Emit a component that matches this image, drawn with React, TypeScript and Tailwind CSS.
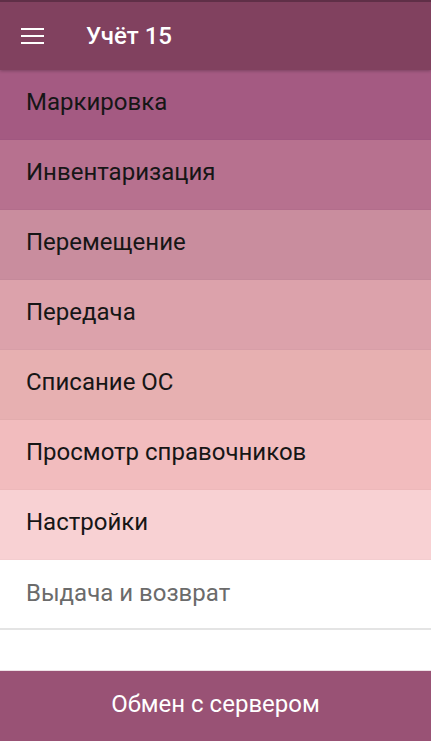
import React from 'react';

const items = [
  { label: 'Маркировка', bg: 'bg-[#a45a82]', line: 'border-[#a05780]' },
  { label: 'Инвентаризация', bg: 'bg-[#b7718f]', line: 'border-[#b26d8b]' },
  { label: 'Перемещение', bg: 'bg-[#c98d9e]', line: 'border-[#c4899a]' },
  { label: 'Передача', bg: 'bg-[#dca2ab]', line: 'border-[#d79ea7]' },
  { label: 'Списание ОС', bg: 'bg-[#e7b0b1]', line: 'border-[#e2acad]' },
  { label: 'Просмотр справочников', bg: 'bg-[#f2bcbe]', line: 'border-[#edb8ba]' },
  { label: 'Настройки', bg: 'bg-[#f8d1d3]', line: 'border-[#f3cdcf]' },
];

export default function App() {
  return (
    <div className="w-[431px] h-[741px] flex flex-col bg-white font-['Roboto','Liberation_Sans',sans-serif]">
      <header className="relative z-10 h-[70px] shrink-0 flex items-center bg-[#81415f] border-t-2 border-[#5f2f47] shadow-[0_1px_3px_rgba(0,0,0,0.25)]">
        <div className="w-[86px] pl-[21px] flex">
          <svg width="23" height="16" viewBox="0 0 23 16" className="text-white">
            <rect x="0" y="0" width="23" height="2" fill="currentColor" />
            <rect x="0" y="7" width="23" height="2" fill="currentColor" />
            <rect x="0" y="14" width="23" height="2" fill="currentColor" />
          </svg>
        </div>
        <h1 className="text-white text-[24px] font-medium">Учёт 15</h1>
      </header>

      <nav className="flex flex-col">
        {items.map((it) => (
          <div key={it.label} className={`h-[70px] flex items-center pl-[26px] pb-[5px] border-b ${it.bg} ${it.line}`}>
            <span className="text-[24px] text-[#161616]">{it.label}</span>
          </div>
        ))}
        <div className="h-[70px] flex items-center pl-[26px] pb-[3px] bg-white border-b-2 border-[#e4e4e4]">
          <span className="text-[24px] text-[#6b6b6b]">Выдача и возврат</span>
        </div>
      </nav>

      <div className="flex-1" />

      <button className="h-[71px] shrink-0 pb-[5px] bg-[#995275] border-t border-[#ede1e6] text-white text-[24px]">
        Обмен с сервером
      </button>
    </div>
  );
}
